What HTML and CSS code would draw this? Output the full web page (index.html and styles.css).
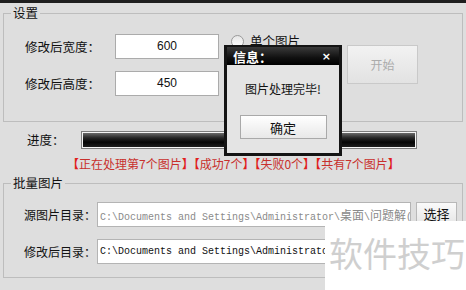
FILE: index.html
```html
<!DOCTYPE html>
<html lang="zh-CN">
<head>
    <meta charset="UTF-8">
    <title>图片批量处理</title>
    <link rel="stylesheet" href="styles.css">
</head>
<body>
    <div class="topbar"></div>

    <fieldset class="group">
        <legend>设置</legend>
        <div class="settings">
            <div class="size-form">
                <div class="row">
                    <span class="label">修改后宽度<i>：</i></span>
                    <div class="num-box">600</div>
                </div>
                <div class="row">
                    <span class="label">修改后高度<i>：</i></span>
                    <div class="num-box">450</div>
                </div>
            </div>
            <div class="mode">
                <span class="radio"></span>
                <span>单个图片</span>
            </div>
            <button class="start-btn" disabled>开始</button>
        </div>
    </fieldset>

    <div class="progress-row">
        <span class="progress-label">进度<i>：</i></span>
        <div class="progress-bar"></div>
    </div>

    <div class="status">
        <b>【</b>正在处理第7个图片<b>】</b><b>【</b>成功7个<b>】</b><b>【</b>失败0个<b>】</b><b>【</b>共有7个图片<b>】</b>
    </div>

    <fieldset class="group batch">
        <legend>批量图片</legend>
        <div class="batch-body">
            <div class="row">
                <span class="dir-label">源图片目录<i>：</i></span>
                <div class="path-box muted">C:\Documents and Settings\Administrator\<span class="cjk">桌面</span>\<span class="cjk">问题解</span>(</div>
                <button class="pick-btn">选择</button>
            </div>
            <div class="row">
                <span class="dir-label">修改后目录<i>：</i></span>
                <div class="path-box">C:\Documents and Settings\Administrato</div>
            </div>
        </div>
    </fieldset>

    <div class="dialog">
        <div class="dialog-title">
            <span>信息<i>：</i></span>
            <span class="close">×</span>
        </div>
        <div class="dialog-body">
            <p class="dialog-msg">图片处理完毕!</p>
            <button class="ok-btn">确定</button>
        </div>
    </div>

    <div class="watermark">软件技巧</div>
</body>
</html>
```

FILE: styles.css
```css
body {
    margin: 0;
    width: 466px;
    height: 290px;
    overflow: hidden;
    position: relative;
    background: #dedede;
    color: #111;
    font-family: "Noto Sans CJK SC", sans-serif;
    font-size: 12px;
}

/* centred full-width colon, as in the old Windows font */
i {
    font-style: normal;
    font-family: "Noto Sans CJK TC", sans-serif;
}

.topbar {
    height: 3px;
    background: #1e1e1e;
}

.group {
    margin: 3px 3px 0 3px;
    padding: 0;
    border: 1px solid #bdbdbd;
    min-width: 0;
}

.group legend {
    margin-left: 7px;
    padding: 0 2px;
    font-size: 12.5px;
    line-height: 14px;
}

.settings {
    display: flex;
    align-items: flex-start;
    padding: 14px 0 25px 21px;
}

.size-form {
    display: flex;
    flex-direction: column;
    gap: 12px;
}

.row {
    display: flex;
    align-items: center;
}

.label {
    width: 90px;
    font-size: 12.5px;
    white-space: nowrap;
}

.num-box {
    width: 104px;
    height: 25px;
    box-sizing: border-box;
    border: 1px solid #ababab;
    background: #fff;
    font-family: "Liberation Sans", sans-serif;
    font-size: 12px;
    line-height: 23px;
    text-align: center;
}

.mode {
    width: 116px;
    margin-left: 12px;
    display: flex;
    align-items: center;
    gap: 6px;
    font-size: 12.5px;
    line-height: 14px;
}

.radio {
    width: 11px;
    height: 11px;
    border: 1px solid #9a9a9a;
    border-radius: 50%;
    background: linear-gradient(#e6e6e6, #fff);
}

.start-btn {
    margin-top: 11px;
    width: 71px;
    height: 39px;
    border: 1px solid #c9c9c9;
    background: linear-gradient(#f2f2f2, #e2e2e2);
    color: #ababab;
    font-family: "Noto Sans CJK SC", sans-serif;
    font-size: 12px;
    padding: 0;
}

.progress-row {
    display: flex;
    align-items: center;
    margin-top: 8px;
    padding-left: 27px;
}

.progress-label {
    width: 55px;
    font-size: 12.5px;
    white-space: nowrap;
}

.progress-bar {
    width: 332px;
    height: 14px;
    border: 1px solid #f4f4f4;
    box-shadow: 0 0 0 1px #7d7d7d;
    background: linear-gradient(#6a6a6a, #262626 35%, #050505 65%, #1c1c1c);
}

.status {
    margin-top: 8px;
    padding-left: 67px;
    font-size: 12px;
    line-height: 14px;
    color: #c8302c;
    white-space: nowrap;
}

.status b {
    color: #e0201c;
}

.batch {
    margin-top: 5px;
    height: 100px;
}

.batch-body {
    display: flex;
    flex-direction: column;
    gap: 12px;
    padding: 12px 0 0 20px;
}

.dir-label {
    width: 73px;
    flex-shrink: 0;
    font-size: 12px;
    white-space: nowrap;
}

.path-box {
    width: 314px;
    height: 25px;
    flex-shrink: 0;
    box-sizing: border-box;
    border: 1px solid #b4b4b4;
    background: #fff;
    padding-left: 2px;
    font-family: "Liberation Mono", monospace;
    font-size: 10px;
    line-height: 23px;
    white-space: nowrap;
    overflow: hidden;
}

.path-box.muted {
    color: #8a8a8a;
}

.path-box .cjk {
    font-family: "Noto Sans CJK SC", sans-serif;
    font-size: 12px;
}

.pick-btn {
    margin: -3px 0 0 5px;
    width: 41px;
    height: 23px;
    flex-shrink: 0;
    padding: 0;
    border: 1px solid #b8b8b8;
    background: linear-gradient(#fafafa, #e6e6e6);
    font-family: "Noto Sans CJK SC", sans-serif;
    font-size: 13px;
    color: #111;
}

.dialog {
    position: absolute;
    left: 224px;
    top: 45px;
    width: 118px;
    height: 111px;
    box-sizing: border-box;
    border: 3px solid #141414;
    border-top-width: 2px;
    background: #e4e4e4;
}

.dialog-title {
    height: 18px;
    display: flex;
    justify-content: space-between;
    align-items: center;
    padding: 0 8px 0 6px;
    background: linear-gradient(#3a3a3a, #101010 60%, #000);
    color: #fff;
    font-weight: bold;
    font-size: 13px;
}

.close {
    font-family: "DejaVu Sans", sans-serif;
    font-size: 11px;
}

.dialog-body {
    display: flex;
    flex-direction: column;
    align-items: center;
}

.dialog-msg {
    margin: 17px 0 0 0;
    font-size: 12px;
    line-height: 14px;
}

.ok-btn {
    margin-top: 19px;
    width: 87px;
    height: 24px;
    padding: 0;
    border: 1px solid #a9a9a9;
    background: linear-gradient(#ffffff, #e8e8e8);
    font-family: "Noto Sans CJK SC", sans-serif;
    font-size: 13px;
    color: #111;
}

.watermark {
    position: absolute;
    left: 325px;
    top: 221px;
    right: 0;
    bottom: 0;
    background: #fff;
    padding: 14px 0 0 4px;
    font-size: 34px;
    line-height: 36px;
    color: #cfcfcf;
    white-space: nowrap;
}
```
